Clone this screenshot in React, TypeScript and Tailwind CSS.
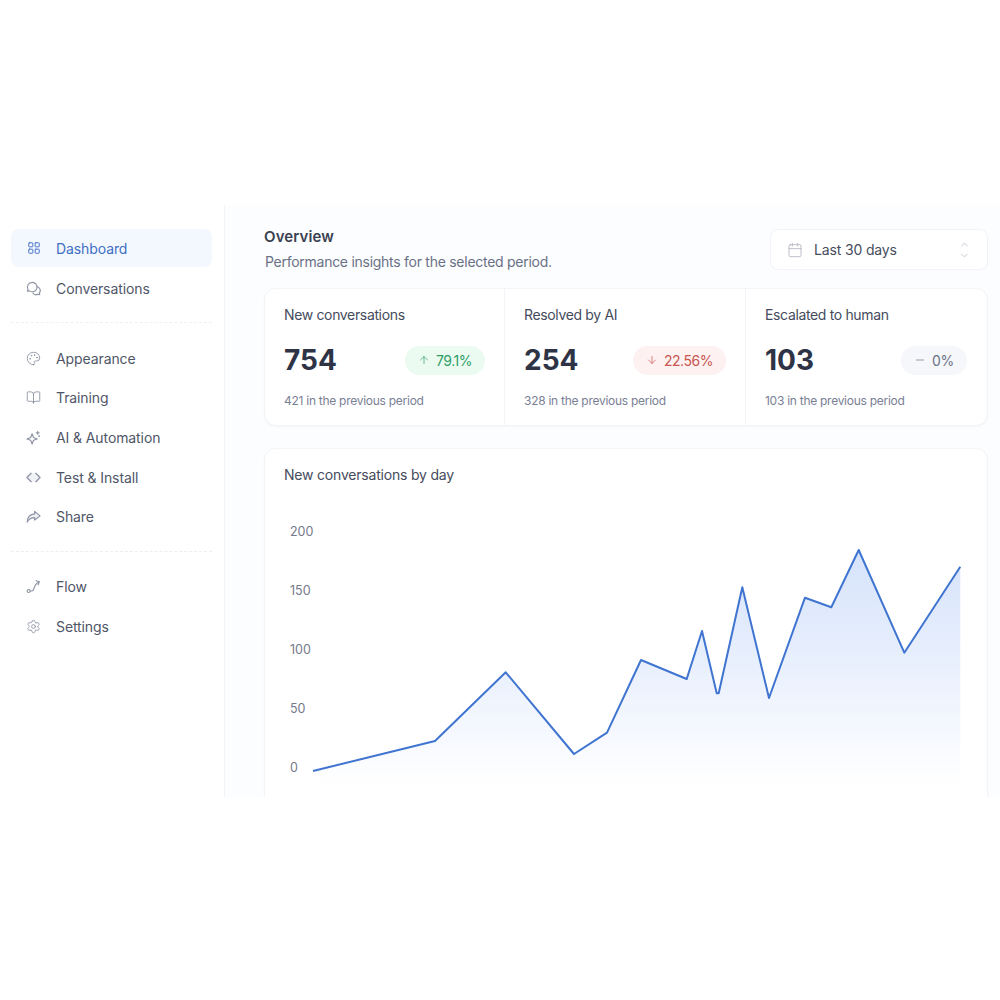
import { ArrowDown, ArrowUp, BookOpen, Calendar, ChevronDown, ChevronUp, LayoutGrid, Minus, Palette, Settings } from "lucide-react";
import type { ReactNode } from "react";

function Bubbles() {
  return (
    <svg viewBox="0 0 16 16" className="h-[15px] w-[15px]" fill="none" stroke="currentColor" strokeWidth="1.2" strokeLinecap="round" strokeLinejoin="round">
      <path d="M6.5 1.5a5 5 0 0 0-4.4 7.4L1.500 11l2.300-.5A5 5 0 1 0 6.500 1.500Z" />
      <path d="M11.600 6.200a4 4 0 0 1 2.600 6.600l.5 1.900-2.100-.5a4 4 0 0 1-5.200-1.400" />
    </svg>
  );
}

function ShareArrow() {
  return (
    <svg viewBox="0 0 16 16" className="h-[15px] w-[15px]" fill="#eef0f5" stroke="currentColor" strokeWidth="1.200" strokeLinejoin="round">
      <path d="M9.200 2.500 15 7.300l-5.800 4.500V9.200C5.800 9.200 3.200 10.400 1.200 14c.3-4.800 3-8.500 8-8.800Z" />
    </svg>
  );
}

function FlowIcon() {
  return (
    <svg viewBox="0 0 16 16" className="h-[15px] w-[15px]" fill="none" stroke="currentColor" strokeWidth="1.200" strokeLinecap="round" strokeLinejoin="round">
      <circle cx="2.800" cy="12.800" r="1.600" />
      <path d="M4.400 12.800h1.800c1.400 0 1.800-1 2.200-2.400.5-1.800 1.200-5.400 5.600-7.400" />
      <path d="M10.800 1.800 14.200 3l-1.300 3.200" />
    </svg>
  );
}

function CodeDiamond() {
  return (
    <svg viewBox="0 0 16 16" className="h-[15px] w-[15px]" fill="none" stroke="currentColor" strokeWidth="1.300" strokeLinecap="round" strokeLinejoin="round">
      <polygon points="5.500,3.500 10.500,3.500 15,8 10.500,12.500 5.500,12.500 1,8" fill="#f1f2f6" stroke="none" />
      <path d="M5.500 3.500 1 8l4.500 4.500" />
      <path d="M10.500 3.500 15 8l-4.500 4.500" />
    </svg>
  );
}

function Sparkle() {
  return (
    <svg viewBox="0 0 16 16" className="h-[15px] w-[15px]" fill="none" stroke="currentColor" strokeWidth="1.200" strokeLinecap="round" strokeLinejoin="round">
      <path d="M6.500 4 8 8l4 1.500L8 11l-1.500 4L5 11 1 9.500 5 8Z" />
      <path d="M12.500 1.500v3M11 3h3" />
      <circle cx="14" cy="6.500" r=".4" />
    </svg>
  );
}

function Item({ icon, label, active }: { icon: ReactNode; label: string; active?: boolean }) {
  return (
    <div className={active ? "flex h-[38px] items-center rounded-lg bg-[#f3f7fe] pl-[15px] text-[#3f6fc4]" : "flex h-[38px] items-center pl-[15px] text-[#4f5668]"}>
      <span className={active ? "flex w-[15px] justify-center text-[#3f6fc4]" : "flex w-[15px] justify-center text-[#8d93a3]"}>{icon}</span>
      <span className="ml-[15px] text-[14px] tracking-[-0.1px]">{label}</span>
    </div>
  );
}

function Stat({ title, value, prev, pill, last, className }: { title: string; value: string; prev: string; pill: ReactNode; last?: boolean; className: string }) {
  return (
    <div className={last ? `min-w-0 pl-[19px] pr-[20px] pt-[15px] ${className}` : `min-w-0 border-r border-[#f3f4f8] pl-[19px] pr-[19px] pt-[15px] ${className}`}>
      <div className="text-[14px] leading-[22px] tracking-[-0.35px] text-[#454b5c]">{title}</div>
      <div className="mt-[19px] flex h-[30px] items-center justify-between">
        <span className="text-[28px] font-bold leading-none text-[#2e3446]">{value}</span>
        {pill}
      </div>
      <div className="mt-[16px] text-[12px] leading-[20px] tracking-[-0.27px] text-[#7a8094]">{prev}</div>
    </div>
  );
}

const linePts = "313,771 435,741 505.700,672.300 574,754 607,732.700 641,660 686.700,679 702,631 716.700,693.300 718.700,693.300 742.300,587.300 769,698 805,597.700 831.300,607.300 858.700,550 904.300,652.700 960.300,566.700";
const ticks = [["200", 531], ["150", 590], ["100", 649], ["50", 708], ["0", 767]] as const;

export default function App() {
  return (
    <div className="h-[1000px] bg-white font-['Inter',sans-serif]">
      <div className="h-[205px]" />
      <div className="flex h-[592px] overflow-hidden">
        <aside className="w-[225px] shrink-0 border-r border-[#f3f4f7] bg-white pl-[11px] pr-[12px] pt-[24px]">
          <div className="flex flex-col gap-[2px]">
            <Item active icon={<LayoutGrid size={14} strokeWidth={1.6} />} label="Dashboard" />
            <Item icon={<Bubbles />} label="Conversations" />
          </div>
          <div className="mb-[16px] mt-[15px] border-t border-dashed border-[#eef0f4]" />
          <div className="flex flex-col gap-[1.700px]">
            <Item icon={<Palette size={15} strokeWidth={1.4} />} label="Appearance" />
            <Item icon={<BookOpen size={15} strokeWidth={1.4} />} label="Training" />
            <Item icon={<Sparkle />} label="AI & Automation" />
            <Item icon={<CodeDiamond />} label="Test & Install" />
            <Item icon={<ShareArrow />} label="Share" />
          </div>
          <div className="mb-[16px] mt-[15px] border-t border-dashed border-[#eceef3]" />
          <div className="flex flex-col gap-[2px]">
            <Item icon={<FlowIcon />} label="Flow" />
            <Item icon={<Settings size={15} strokeWidth={1.4} />} label="Settings" />
          </div>
        </aside>
        <main className="min-w-0 flex-1 bg-[#fcfdfe] pl-[39px] pr-[12px] pt-[21px]">
          <div className="flex items-start justify-between">
            <div>
              <h1 className="text-[15px] font-semibold leading-[22px] tracking-[0.1px] text-[#3a4052]">Overview</h1>
              <p className="ml-[1px] mt-[3px] text-[14px] leading-[22px] tracking-[-0.27px] text-[#6a7186]">Performance insights for the selected period.</p>
            </div>
            <div className="mt-[3px] flex h-[41px] w-[218px] items-center rounded-lg border border-[#f1f3f7] bg-white pl-[16px] pr-[17px]">
              <Calendar size={16} strokeWidth={1.1} className="text-[#a4a9b6]" />
              <span className="ml-[11px] flex-1 text-[14px] tracking-[-0.15px] text-[#474d5e]">Last 30 days</span>
              <span className="flex flex-col text-[#a6abb8]">
                <ChevronUp size={11} strokeWidth={1.4} />
                <ChevronDown size={11} strokeWidth={1.4} />
              </span>
            </div>
          </div>
          <div className="mt-[15px] flex h-[138px] rounded-xl border border-[#f2f4f8] bg-white shadow-[0_1px_2px_rgba(30,41,70,0.04)]">
            <Stat
              className="w-[240px] shrink-0"
              title="New conversations"
              value="754"
              prev="421 in the previous period"
              pill={
                <span className="flex h-[29px] w-[80px] items-center justify-center gap-[6px] rounded-full bg-[#ecfbf2] text-[14px] tracking-[-0.45px] text-[#2f9e66]">
                  <ArrowUp size={12} strokeWidth={1.4} />
                  79.1%
                </span>
              }
            />
            <Stat
              className="w-[241px] shrink-0"
              title="Resolved by AI"
              value="254"
              prev="328 in the previous period"
              pill={
                <span className="flex h-[29px] w-[93px] items-center justify-center gap-[6px] rounded-full bg-[#fdf2f1] text-[14px] tracking-[-0.45px] text-[#c9554f]">
                  <ArrowDown size={12} strokeWidth={1.4} />
                  22.56%
                </span>
              }
            />
            <Stat
              last
              className="flex-1"
              title="Escalated to human"
              value="103"
              prev="103 in the previous period"
              pill={
                <span className="flex h-[29px] w-[66px] items-center justify-center gap-[6px] rounded-full bg-[#f6f7fa] text-[14px] tracking-[-0.3px] text-[#6b7286]">
                  <Minus size={12} strokeWidth={1.4} />
                  0%
                </span>
              }
            />
          </div>
          <section className="mt-[22px] h-[400px] rounded-xl border border-[#f2f4f8] bg-white pl-[19px] pr-[20px] pt-[15px] shadow-[0_1px_2px_rgba(30,41,70,0.04)]">
            <h2 className="text-[14px] leading-[22px] tracking-[-0.2px] text-[#454b5c]">New conversations by day</h2>
            <svg className="-ml-[20px] mt-[12px] block" width="724" height="300" viewBox="264 498 724 300">
              <defs>
                <linearGradient id="area" x1="0" y1="550" x2="0" y2="785" gradientUnits="userSpaceOnUse">
                  <stop offset="0" stopColor="#d6e3fb" />
                  <stop offset="0.5" stopColor="#e9f0fd" />
                  <stop offset="1" stopColor="#ffffff" />
                </linearGradient>
              </defs>
              {ticks.map(([t, y]) => (
                <text key={t} x="290" y={y + 5} fontSize="12.500" fill="#74798b">{t}</text>
              ))}
              <polygon points={`313,785 ${linePts} 960.300,785`} fill="url(#area)" />
              <polyline points={linePts} fill="none" stroke="#3f74d0" strokeWidth="2" strokeLinejoin="round" />
            </svg>
          </section>
        </main>
      </div>
    </div>
  );
}
